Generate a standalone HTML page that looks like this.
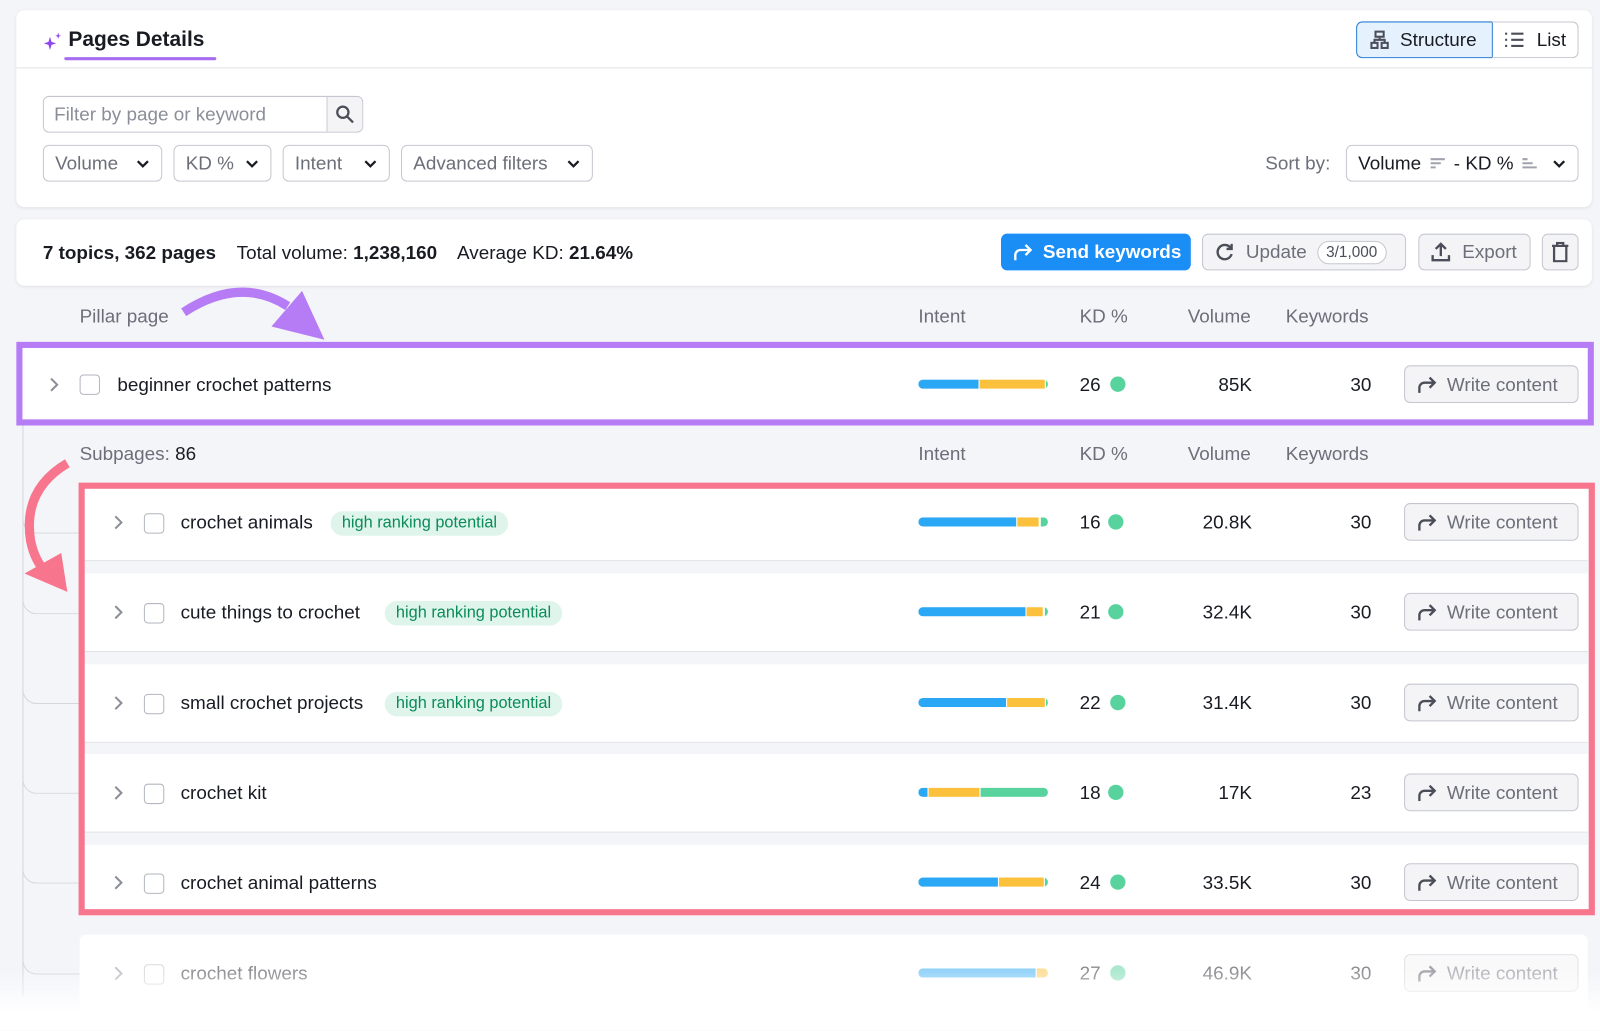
<!DOCTYPE html>
<html><head><meta charset="utf-8"><style>
*{box-sizing:border-box;margin:0;padding:0}
html,body{width:1600px;height:1002px;overflow:hidden;background:#f4f5f9}
#w{position:absolute;left:0;top:0;width:1568px;height:982px;transform:scale(1.0204);transform-origin:0 0;font-family:"Liberation Sans",sans-serif;color:#191b23;font-size:18.5px}
.a{position:absolute}
.card{position:absolute;background:#fff;border-radius:8px;box-shadow:0 1px 3px rgba(0,0,0,.08)}
.btn{position:absolute;border:1px solid #c4c7cf;border-radius:6px;background:#fff;display:flex;align-items:center;color:#6c6e79;font-size:18.5px}
.dd{height:36px;top:142px;padding-left:11px}
.chev{position:absolute;right:11px;top:10px}
.hd{position:absolute;color:#6c6e79;font-size:18.5px}
.row{position:absolute;left:83px;width:1473px;height:72px;background:#fff;border-bottom:1px solid #e0e1e6}
.ck{position:absolute;width:20px;height:20px;border:1.5px solid #b3b6bf;border-radius:4px;background:#fff}
.tag{position:absolute;background:#dff5ec;color:#0b8b58;font-size:16px;padding:3px 11px;border-radius:12px}
.bar{position:absolute;left:900px;width:127px;height:9px;border-radius:5px;overflow:hidden;display:flex}
.bar i{display:block;height:100%}
.dot{position:absolute;width:15px;height:15px;border-radius:50%;background:#59d39e}
.wc{position:absolute;left:1376px;width:171px;height:37px;background:#f4f4f6;border:1px solid #c4c7cf;border-radius:6px;color:#6c6e79;font-size:18.5px;display:flex;align-items:center;padding-left:10px}
.wc svg{margin-right:9px}
.num{position:absolute;text-align:right}
</style></head><body><div id="w">

<div class="card" style="left:16px;top:10px;width:1544px;height:193px"></div>
<div class="a" style="left:16px;top:66px;width:1544px;height:1px;background:#e0e1e6"></div>
<svg class="a" style="left:41px;top:30px" width="22" height="22" viewBox="0 0 22 22"><path d="M8 6 L9.5 11 L14 12.5 L9.5 14 L8 19 L6.5 14 L2 12.5 L6.5 11Z" fill="#8f45f0"/><path d="M16 2 L16.8 4.5 L19 5 L16.8 5.8 L16 8 L15.2 5.8 L13 5 L15.2 4.5Z" fill="#8f45f0"/></svg>
<div class="a" style="left:67px;top:27px;font-size:20.5px;font-weight:bold">Pages Details</div>
<div class="a" style="left:63px;top:56px;width:149px;height:3px;background:#a76cf0;border-radius:2px"></div>

<div class="a" style="left:1329px;top:21px;width:134px;height:36px;background:#e6f1fe;border:1px solid #2b7fd8;border-radius:6px 0 0 6px;display:flex;align-items:center;padding-left:12px">
<svg width="20" height="20" viewBox="0 0 20 20" fill="none" stroke="#4b4e59" stroke-width="2"><rect x="6" y="2" width="8" height="5"/><rect x="2" y="13" width="6" height="5"/><rect x="12" y="13" width="6" height="5"/><path d="M10 7v3M5 13v-3h10v3"/></svg><span style="margin-left:10px">Structure</span></div>
<div class="a" style="left:1462px;top:21px;width:85px;height:36px;border:1px solid #c4c7cf;border-left:none;border-radius:0 6px 6px 0;display:flex;align-items:center;padding-left:12px">
<svg width="20" height="18" viewBox="0 0 20 18" stroke="#4b4e59" stroke-width="2"><path d="M1 3h2M7 3h12M1 9h2M7 9h12M1 15h2M7 15h12"/></svg><span style="margin-left:12px">List</span></div>

<div class="btn" style="left:42px;top:94px;width:314px;height:36px;padding-left:10px;color:#8b8e99">Filter by page or keyword</div>
<div class="a" style="left:320px;top:95px;width:35px;height:34px;background:#f4f4f6;border-left:1px solid #c4c7cf;border-radius:0 6px 6px 0"></div>
<svg class="a" style="left:328px;top:102px" width="20" height="20" viewBox="0 0 20 20" fill="none" stroke="#4b4e59" stroke-width="2.2"><circle cx="8" cy="8" r="5.5"/><path d="M12 12l6 6"/></svg>

<div class="btn dd" style="left:42px;width:117px">Volume<svg class="chev" width="14" height="14" viewBox="0 0 14 14"><path d="M2 5l5 5 5-5" fill="none" stroke="#191b23" stroke-width="2.2"/></svg></div>
<div class="btn dd" style="left:170px;width:96px">KD %<svg class="chev" width="14" height="14" viewBox="0 0 14 14"><path d="M2 5l5 5 5-5" fill="none" stroke="#191b23" stroke-width="2.2"/></svg></div>
<div class="btn dd" style="left:277px;width:105px">Intent<svg class="chev" width="14" height="14" viewBox="0 0 14 14"><path d="M2 5l5 5 5-5" fill="none" stroke="#191b23" stroke-width="2.2"/></svg></div>
<div class="btn dd" style="left:393px;width:188px">Advanced filters<svg class="chev" width="14" height="14" viewBox="0 0 14 14"><path d="M2 5l5 5 5-5" fill="none" stroke="#191b23" stroke-width="2.2"/></svg></div>

<div class="a" style="left:1240px;top:149px;color:#6c6e79">Sort by:</div>
<div class="btn dd" style="left:1319px;width:228px;color:#191b23">Volume
<svg style="margin:0 8px" width="16" height="12" viewBox="0 0 16 12" stroke="#a0a3ad" stroke-width="2"><path d="M1 2h14M1 6h10M1 10h5"/></svg>- KD %
<svg style="margin-left:8px" width="16" height="12" viewBox="0 0 16 12" stroke="#a0a3ad" stroke-width="2"><path d="M1 2h5M1 6h10M1 10h14"/></svg>
<svg class="chev" width="14" height="14" viewBox="0 0 14 14"><path d="M2 5l5 5 5-5" fill="none" stroke="#191b23" stroke-width="2.2"/></svg></div>

<div class="card" style="left:16px;top:215px;width:1544px;height:65px"></div>
<div class="a" style="left:42px;top:237px"><b>7 topics, 362 pages</b>&nbsp;&nbsp;&nbsp; Total volume: <b>1,238,160</b>&nbsp;&nbsp;&nbsp; Average KD: <b>21.64%</b></div>
<div class="a" style="left:981px;top:229px;width:186px;height:36px;background:#1a8ef5;border-radius:6px;color:#fff;font-weight:bold;display:flex;align-items:center;padding-left:10px">
<svg width="22" height="20" viewBox="0 0 22 20" fill="none" stroke="#fff" stroke-width="2.3"><path d="M4 18v-5a5 5 0 0 1 5-5h10M14 3l5 5-5 5"/></svg><span style="margin-left:9px">Send keywords</span></div>
<div class="btn" style="left:1178px;top:229px;width:200px;height:36px;background:#f4f4f6;padding-left:10px">
<svg width="22" height="22" viewBox="0 0 22 22" fill="none" stroke="#4b4e59" stroke-width="2.3"><path d="M17 7a7 7 0 1 0 1 6"/><path d="M18 3v5h-5"/></svg><span style="margin-left:10px">Update</span>
<span style="margin-left:10px;border:1px solid #c4c7cf;border-radius:14px;background:#fff;font-size:15px;padding:2px 8px;color:#4b4e59">3/1,000</span></div>
<div class="btn" style="left:1390px;top:229px;width:110px;height:36px;background:#f4f4f6;padding-left:10px">
<svg width="22" height="22" viewBox="0 0 22 22" fill="none" stroke="#4b4e59" stroke-width="2.3"><path d="M11 15V3M6 8l5-5 5 5M3 14v5h16v-5"/></svg><span style="margin-left:10px">Export</span></div>
<div class="btn" style="left:1511px;top:229px;width:36px;height:36px;background:#f4f4f6;justify-content:center">
<svg width="18" height="20" viewBox="0 0 18 20" fill="none" stroke="#4b4e59" stroke-width="2.2"><path d="M1 4h16M6 4V1h6v3M3 4v15h12V4"/></svg></div>

<div class="hd" style="left:78px;top:299px">Pillar page</div>
<div class="hd" style="left:900px;top:299px">Intent</div>
<div class="hd" style="left:1058px;top:299px">KD %</div>
<div class="hd" style="left:1164px;top:299px">Volume</div>
<div class="hd" style="left:1260px;top:299px">Keywords</div>

<div class="a" style="left:22px;top:416px;width:1px;height:560px;background:#d5d7dd"></div>
<div class="a" style="left:22px;top:470px;width:56px;height:53px;border-left:1px solid #d5d7dd;border-bottom:1px solid #d5d7dd;border-bottom-left-radius:14px"></div>
<div class="a" style="left:22px;top:560px;width:56px;height:42px;border-left:1px solid #d5d7dd;border-bottom:1px solid #d5d7dd;border-bottom-left-radius:14px"></div>
<div class="a" style="left:22px;top:650px;width:56px;height:40px;border-left:1px solid #d5d7dd;border-bottom:1px solid #d5d7dd;border-bottom-left-radius:14px"></div>
<div class="a" style="left:22px;top:740px;width:56px;height:38px;border-left:1px solid #d5d7dd;border-bottom:1px solid #d5d7dd;border-bottom-left-radius:14px"></div>
<div class="a" style="left:22px;top:830px;width:56px;height:36px;border-left:1px solid #d5d7dd;border-bottom:1px solid #d5d7dd;border-bottom-left-radius:14px"></div>
<div class="a" style="left:22px;top:915px;width:56px;height:40px;border-left:1px solid #d5d7dd;border-bottom:1px solid #d5d7dd;border-bottom-left-radius:14px"></div>

<div class="a" style="left:16px;top:335px;width:1546px;height:82px;background:#fff;border:6px solid #b57cf6"></div>
<svg class="a" style="left:47px;top:369px" width="12" height="16" viewBox="0 0 12 16"><path d="M3 2l6 6-6 6" fill="none" stroke="#8b8e99" stroke-width="2"/></svg>
<div class="ck" style="left:78px;top:367px"></div>
<div class="a" style="left:115px;top:366px">beginner crochet patterns</div>
<div class="bar" style="top:372px"><i style="width:59px;background:#2aa8f5"></i><i style="width:1px;background:#fff"></i><i style="width:64px;background:#fcc13c"></i><i style="width:1px;background:#fff"></i><i style="flex:1;background:#59d39e"></i></div>
<div class="a" style="left:1058px;top:366px">26</div><div class="dot" style="left:1088px;top:369px"></div>
<div class="num" style="left:1130px;width:97px;top:366px">85K</div>
<div class="num" style="left:1260px;width:84px;top:366px">30</div>
<div class="wc" style="top:358px"><svg width="22" height="20" viewBox="0 0 22 20" fill="none" stroke="#4b4e59" stroke-width="2.3"><path d="M4 18v-5a5 5 0 0 1 5-5h10M14 3l5 5-5 5"/></svg>Write content</div>

<div class="hd" style="left:78px;top:434px">Subpages: <span style="color:#191b23">86</span></div>
<div class="hd" style="left:900px;top:434px">Intent</div>
<div class="hd" style="left:1058px;top:434px">KD %</div>
<div class="hd" style="left:1164px;top:434px">Volume</div>
<div class="hd" style="left:1260px;top:434px">Keywords</div>

<div class="row" style="top:478px;height:72px"></div>
<div class="row" style="top:562px;height:77px"></div>
<div class="row" style="top:651px;height:77px"></div>
<div class="row" style="top:739px;height:77px"></div>
<div class="row" style="top:828px;height:68px"></div>
<div class="row" style="left:78px;top:916px;width:1478px;height:90px;border-radius:6px"></div>

<div class="a" style="left:77px;top:473px;width:1486px;height:424px;border:6px solid #f7758d"></div>

<svg class="a" style="left:110px;top:504px" width="12" height="16" viewBox="0 0 12 16"><path d="M3 2l6 6-6 6" fill="none" stroke="#8b8e99" stroke-width="2"/></svg>
<div class="ck" style="left:141px;top:503px"></div>
<div class="a" style="left:177px;top:501px">crochet animals</div>
<div class="tag" style="left:324px;top:501px">high ranking potential</div>
<div class="bar" style="top:507px"><i style="width:96px;background:#2aa8f5"></i><i style="width:1px;background:#fff"></i><i style="width:21px;background:#fcc13c"></i><i style="width:2px;background:#fff"></i><i style="flex:1;background:#59d39e"></i></div>
<div class="a" style="left:1058px;top:501px">16</div><div class="dot" style="left:1086px;top:504px"></div>
<div class="num" style="left:1130px;width:97px;top:501px">20.8K</div>
<div class="num" style="left:1260px;width:84px;top:501px">30</div>
<div class="wc" style="top:493px"><svg width="22" height="20" viewBox="0 0 22 20" fill="none" stroke="#4b4e59" stroke-width="2.3"><path d="M4 18v-5a5 5 0 0 1 5-5h10M14 3l5 5-5 5"/></svg>Write content</div>

<svg class="a" style="left:110px;top:592px" width="12" height="16" viewBox="0 0 12 16"><path d="M3 2l6 6-6 6" fill="none" stroke="#8b8e99" stroke-width="2"/></svg>
<div class="ck" style="left:141px;top:591px"></div>
<div class="a" style="left:177px;top:589px">cute things to crochet</div>
<div class="tag" style="left:377px;top:589px">high ranking potential</div>
<div class="bar" style="top:595px"><i style="width:105px;background:#2aa8f5"></i><i style="width:1px;background:#fff"></i><i style="width:16px;background:#fcc13c"></i><i style="width:2px;background:#fff"></i><i style="flex:1;background:#59d39e"></i></div>
<div class="a" style="left:1058px;top:589px">21</div><div class="dot" style="left:1086px;top:592px"></div>
<div class="num" style="left:1130px;width:97px;top:589px">32.4K</div>
<div class="num" style="left:1260px;width:84px;top:589px">30</div>
<div class="wc" style="top:581px"><svg width="22" height="20" viewBox="0 0 22 20" fill="none" stroke="#4b4e59" stroke-width="2.3"><path d="M4 18v-5a5 5 0 0 1 5-5h10M14 3l5 5-5 5"/></svg>Write content</div>

<svg class="a" style="left:110px;top:681px" width="12" height="16" viewBox="0 0 12 16"><path d="M3 2l6 6-6 6" fill="none" stroke="#8b8e99" stroke-width="2"/></svg>
<div class="ck" style="left:141px;top:680px"></div>
<div class="a" style="left:177px;top:678px">small crochet projects</div>
<div class="tag" style="left:377px;top:678px">high ranking potential</div>
<div class="bar" style="top:684px"><i style="width:86px;background:#2aa8f5"></i><i style="width:1px;background:#fff"></i><i style="width:37px;background:#fcc13c"></i><i style="width:1px;background:#fff"></i><i style="flex:1;background:#59d39e"></i></div>
<div class="a" style="left:1058px;top:678px">22</div><div class="dot" style="left:1088px;top:681px"></div>
<div class="num" style="left:1130px;width:97px;top:678px">31.4K</div>
<div class="num" style="left:1260px;width:84px;top:678px">30</div>
<div class="wc" style="top:670px"><svg width="22" height="20" viewBox="0 0 22 20" fill="none" stroke="#4b4e59" stroke-width="2.3"><path d="M4 18v-5a5 5 0 0 1 5-5h10M14 3l5 5-5 5"/></svg>Write content</div>

<svg class="a" style="left:110px;top:769px" width="12" height="16" viewBox="0 0 12 16"><path d="M3 2l6 6-6 6" fill="none" stroke="#8b8e99" stroke-width="2"/></svg>
<div class="ck" style="left:141px;top:768px"></div>
<div class="a" style="left:177px;top:766px">crochet kit</div>
<div class="bar" style="top:772px"><i style="width:9px;background:#2aa8f5"></i><i style="width:1px;background:#fff"></i><i style="width:50px;background:#fcc13c"></i><i style="width:1px;background:#fff"></i><i style="flex:1;background:#59d39e"></i></div>
<div class="a" style="left:1058px;top:766px">18</div><div class="dot" style="left:1086px;top:769px"></div>
<div class="num" style="left:1130px;width:97px;top:766px">17K</div>
<div class="num" style="left:1260px;width:84px;top:766px">23</div>
<div class="wc" style="top:758px"><svg width="22" height="20" viewBox="0 0 22 20" fill="none" stroke="#4b4e59" stroke-width="2.3"><path d="M4 18v-5a5 5 0 0 1 5-5h10M14 3l5 5-5 5"/></svg>Write content</div>

<svg class="a" style="left:110px;top:857px" width="12" height="16" viewBox="0 0 12 16"><path d="M3 2l6 6-6 6" fill="none" stroke="#8b8e99" stroke-width="2"/></svg>
<div class="ck" style="left:141px;top:856px"></div>
<div class="a" style="left:177px;top:854px">crochet animal patterns</div>
<div class="bar" style="top:860px"><i style="width:78px;background:#2aa8f5"></i><i style="width:1px;background:#fff"></i><i style="width:44px;background:#fcc13c"></i><i style="width:1px;background:#fff"></i><i style="flex:1;background:#59d39e"></i></div>
<div class="a" style="left:1058px;top:854px">24</div><div class="dot" style="left:1088px;top:857px"></div>
<div class="num" style="left:1130px;width:97px;top:854px">33.5K</div>
<div class="num" style="left:1260px;width:84px;top:854px">30</div>
<div class="wc" style="top:846px"><svg width="22" height="20" viewBox="0 0 22 20" fill="none" stroke="#4b4e59" stroke-width="2.3"><path d="M4 18v-5a5 5 0 0 1 5-5h10M14 3l5 5-5 5"/></svg>Write content</div>

<div style="opacity:.5">
<svg class="a" style="left:110px;top:946px" width="12" height="16" viewBox="0 0 12 16"><path d="M3 2l6 6-6 6" fill="none" stroke="#8b8e99" stroke-width="2"/></svg>
<div class="ck" style="left:141px;top:945px"></div>
<div class="a" style="left:177px;top:943px">crochet flowers</div>
<div class="bar" style="top:949px"><i style="width:115px;background:#2aa8f5"></i><i style="width:1px;background:#fff"></i><i style="flex:1;background:#fcc13c"></i></div>
<div class="a" style="left:1058px;top:943px">27</div><div class="dot" style="left:1088px;top:946px"></div>
<div class="num" style="left:1130px;width:97px;top:943px">46.9K</div>
<div class="num" style="left:1260px;width:84px;top:943px">30</div>
<div class="wc" style="top:935px"><svg width="22" height="20" viewBox="0 0 22 20" fill="none" stroke="#4b4e59" stroke-width="2.3"><path d="M4 18v-5a5 5 0 0 1 5-5h10M14 3l5 5-5 5"/></svg>Write content</div>
</div>
<div class="a" style="left:0;top:950px;width:1600px;height:60px;background:linear-gradient(rgba(255,255,255,0),#fff 75%)"></div>

<svg class="a" style="left:0;top:270px" width="340" height="320" viewBox="0 0 340 320">
<path d="M180 36 Q235 0 282 30" fill="none" stroke="#b57cf6" stroke-width="9"/>
<path d="M296 15 L318 63 L266 50 Z" fill="#b57cf6"/>
<path d="M66 184 Q22 210 30 260 Q34 280 46 292" fill="none" stroke="#f7758d" stroke-width="9"/>
<path d="M24 292 L60 272 L66 310 Z" fill="#f7758d"/>
</svg>
</div></body></html>
